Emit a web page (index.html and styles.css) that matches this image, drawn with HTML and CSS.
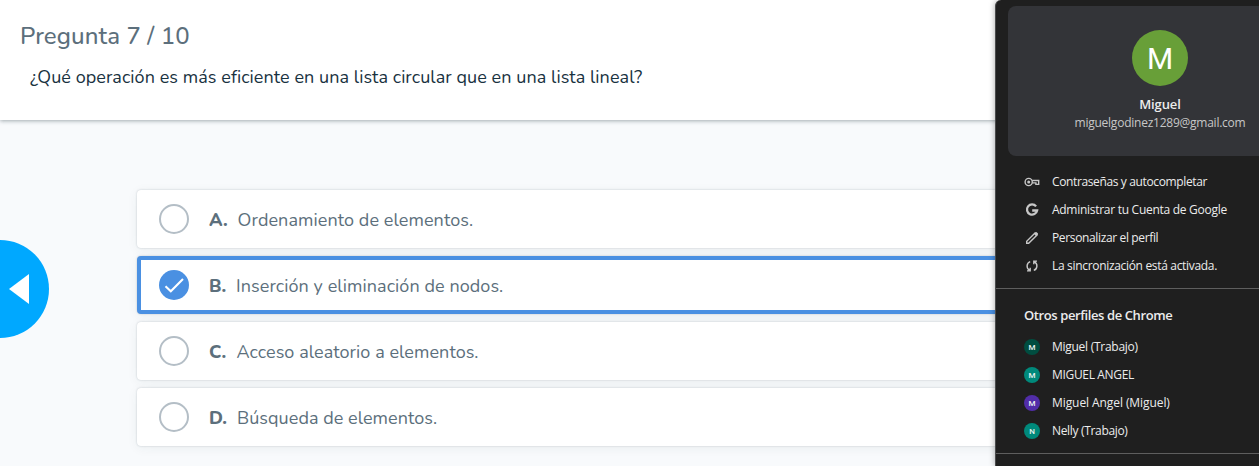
FILE: index.html
```html
<!DOCTYPE html>
<html lang="es">
<head>
<meta charset="utf-8">
<title>Pregunta 7 / 10</title>
<link rel="stylesheet" href="styles.css">
</head>
<body>
<main class="quiz">
  <header class="question">
    <h1 class="question-count">Pregunta 7 / 10</h1>
    <p class="question-text">¿Qué operación es más eficiente en una lista circular que en una lista lineal?</p>
  </header>
  <div class="options">
    <div class="option"><span class="radio"></span><b class="letter">A.</b><span class="answer answer-a">Ordenamiento de elementos.</span></div>
    <div class="option selected"><span class="radio checked"><svg viewBox="0 0 30 30" width="30" height="30"><path d="M6.5 16.2 11.8 21.2 24 9" fill="none" stroke="#fff" stroke-width="2.1"/></svg></span><b class="letter">B.</b><span class="answer answer-b">Inserción y eliminación de nodos.</span></div>
    <div class="option"><span class="radio"></span><b class="letter">C.</b><span class="answer answer-c">Acceso aleatorio a elementos.</span></div>
    <div class="option"><span class="radio"></span><b class="letter">D.</b><span class="answer answer-d">Búsqueda de elementos.</span></div>
  </div>
</main>
<button class="previous" aria-label="Anterior"><svg viewBox="0 0 20 30" width="20" height="30"><path d="M20 0V30L0 15Z" fill="#fff"/></svg></button>

<aside class="profile-menu">
  <section class="account">
    <div class="avatar">M</div>
    <div class="account-name">Miguel</div>
    <div class="account-mail">miguelgodinez1289@gmail.com</div>
  </section>
  <ul class="menu">
    <li class="item"><svg class="icon" viewBox="0 0 16 16"><g fill="none" stroke="currentColor" stroke-width="1.4"><circle cx="4.7" cy="8" r="3.6"/><path d="M8.1 6.5H14.7V10.4H11.9V8.9H8.3"/></g><circle cx="4.7" cy="8" r="1.5" fill="currentColor"/></svg><span class="label passwords">Contraseñas y autocompletar</span></li>
    <li class="item"><svg class="icon" viewBox="0 0 16 16"><path d="M12.1 4.4A5.1 5.1 0 1 0 13.1 8.5H8.2" fill="none" stroke="currentColor" stroke-width="2.3"/></svg><span class="label manage">Administrar tu Cuenta de Google</span></li>
    <li class="item"><svg class="icon" viewBox="0 0 16 16"><path d="M2.7 13.3V11.3L10.8 3.2 12.8 5.2 4.7 13.3Z" fill="none" stroke="currentColor" stroke-width="1.4"/><path d="M9.8 3.7 11.3 2.2Q12 1.6 12.7 2.2L13.8 3.3Q14.4 4 13.8 4.7L12.3 6.2Z" fill="currentColor"/></svg><span class="label personalize">Personalizar el perfil</span></li>
    <li class="item"><svg class="icon" viewBox="0 0 16 16"><path d="M6.2 3.6A4.8 4.8 0 0 0 5.4 12.2M3 12.9H6.2V9.8M9.8 12.4A4.8 4.8 0 0 0 10.6 3.8M13 3.1H9.8V6.2" fill="none" stroke="currentColor" stroke-width="1.4"/></svg><span class="label sync">La sincronización está activada.</span></li>
  </ul>
  <section class="others">
    <h2 class="others-title">Otros perfiles de Chrome</h2>
    <ul class="profiles">
      <li class="item"><span class="badge forest">M</span><span class="label work">Miguel (Trabajo)</span></li>
      <li class="item"><span class="badge teal">M</span><span class="label upper">MIGUEL ANGEL</span></li>
      <li class="item"><span class="badge purple">M</span><span class="label personal">Miguel Angel (Miguel)</span></li>
      <li class="item"><span class="badge teal">N</span><span class="label nelly">Nelly (Trabajo)</span></li>
    </ul>
  </section>
</aside>
</body>
</html>
```
FILE: styles.css
```css
* { box-sizing: border-box; }
body {
  margin: 0;
  height: 466px;
  position: relative;
  overflow: hidden;
  background: #f8fafc;
  font-family: Nunito, "Noto Sans", sans-serif;
}
h1, h2, p, ul { margin: 0; padding: 0; font-weight: 400; }
ul { list-style: none; }
.question {
  height: 120px;
  padding: 20px 20px 0;
  background: #fff;
  box-shadow: 0 1px 4px rgba(40, 60, 70, .42);
}
.question-count { font-size: 24px; font-weight: 500; letter-spacing: .1px; line-height: 32px; color: #5c6f7c; white-space: nowrap; }
.question-text { padding: 12px 0 0 10px; font-size: 18px; letter-spacing: .065px; line-height: 26px; color: #19323f; white-space: nowrap; }
.options { display: flex; flex-direction: column; gap: 8px; margin: 70px 0 0 137px; }
.option {
  display: flex;
  align-items: center;
  height: 58px;
  padding-left: 22px;
  border-radius: 4px;
  background: #fff;
  box-shadow: 0 0 2px rgba(40, 60, 70, .25), 0 2px 12px rgba(40, 60, 70, .06);
  color: #5c6f7c;
  font-size: 18px;
  letter-spacing: .08px;
  line-height: 26px;
  white-space: nowrap;
}
.option.selected { border: 4px solid #4a90e2; padding-left: 18px; }
.radio { flex: none; width: 30px; height: 30px; border: 2px solid #b4bec6; border-radius: 50%; }
.radio.checked { border: 0; background: #4a90e2; }
.radio svg { display: block; }
.letter { width: 28px; margin-left: 20px; padding-top: 2px; font-weight: 800; }
.answer { padding-top: 2px; }
.answer-a { margin-left: .6px; }
.answer-b { margin-left: -1px; }
.answer-c { margin-left: -.5px; letter-spacing: .06px; }
.answer-d { letter-spacing: .05px; }
.previous {
  position: absolute;
  left: -49px;
  top: 240px;
  width: 98px;
  height: 98px;
  padding: 0 20px 0 0;
  display: flex;
  align-items: center;
  justify-content: flex-end;
  border: 0;
  border-radius: 50%;
  background: #00a8ff;
}
.profile-menu {
  position: absolute;
  right: 0;
  top: 0;
  width: 264px;
  height: 466px;
  padding: 6px 0 0;
  border-left: 1px solid #4a4b4c;
  border-radius: 6px 0 0 0;
  background: #1f1f1f;
  box-shadow: 0 0 6px rgba(0, 0, 0, .35);
  color: #ececec;
  font-family: "Segoe UI", "Open Sans", sans-serif;
  font-size: 12px;
  white-space: nowrap;
}
.account {
  display: flex;
  flex-direction: column;
  align-items: center;
  height: 150px;
  margin-left: 12px;
  padding: 24px 0 0 53px;
  border-radius: 8px 0 0 8px;
  background: #333438;
}
.avatar {
  display: flex;
  align-items: center;
  justify-content: center;
  width: 56px;
  height: 56px;
  border-radius: 50%;
  background: #689f38;
  color: #fff;
  font: 30px Roboto, sans-serif;
}
.account-name { margin-top: 9px; font-size: 13px; letter-spacing: -.1px; line-height: 18px; font-weight: 600; }
.account-mail { line-height: 19px; letter-spacing: -.24px; color: #c7c7c7; }
.menu { padding: 12px 0 8px 28px; border-bottom: 1px solid #5e5e5e; }
.item { display: flex; align-items: center; height: 28px; }
.label { padding-bottom: 1px; }
.passwords { letter-spacing: -.37px; }
.manage { letter-spacing: -.28px; }
.personalize { letter-spacing: -.36px; }
.sync { letter-spacing: -.32px; }
.work { letter-spacing: -.27px; }
.upper { letter-spacing: -.33px; }
.personal { letter-spacing: -.08px; }
.nelly { letter-spacing: -.33px; }
.icon { flex: none; width: 16px; height: 16px; margin-right: 12px; color: #c7c7c7; }
.others { padding: 16px 0 8px 28px; border-bottom: 1px solid #5e5e5e; }
.others-title { height: 28px; font-size: 13px; letter-spacing: -.4px; line-height: 20px; font-weight: 600; }
.badge {
  display: flex;
  align-items: center;
  justify-content: center;
  flex: none;
  width: 16px;
  height: 16px;
  margin-right: 12px;
  border-radius: 50%;
  color: #e8f1ef;
  font: 500 8px Roboto, sans-serif;
}
.forest { background: #004d40; }
.teal { background: #00897b; }
.purple { background: #512da8; }
```
